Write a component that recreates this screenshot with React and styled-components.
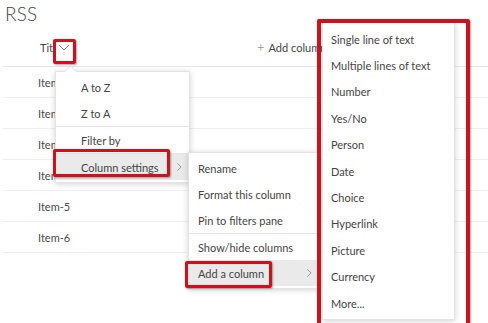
import React from 'react'
import styled, { createGlobalStyle } from 'styled-components'

const GlobalStyle = createGlobalStyle`
  html, body { margin: 0; padding: 0; background: #fff; }
  body { font-family: Lato, "Open Sans", sans-serif; color: #333; }
`

const Page = styled.div`
  position: relative;
  width: 488px;
  height: 323px;
  overflow: hidden;
  background: #fff;
`

const Heading = styled.h1`
  margin: 0 0 0 5px;
  font-size: 19px;
  font-weight: 300;
  line-height: 28px;
  color: #444;
  letter-spacing: 0.2px;
`

const List = styled.div`
  margin-left: 3px;
  display: flex;
  flex-direction: column;
`

const HeaderRow = styled.div`
  height: 38px;
  display: flex;
  align-items: center;
  border-bottom: 1px solid #e6e6e6;
  font-size: 11px;
  color: #444;
`

const TitleCell = styled.div`
  width: 254px;
  padding-left: 37px;
  display: flex;
  align-items: center;
  box-sizing: border-box;
`

const ColumnButton = styled.div`
  position: relative;
  margin-left: -6px;
  width: 18px;
  height: 18px;
  display: flex;
  align-items: center;
  justify-content: center;
  background: #fff;
`

const AddColumn = styled.div`
  display: flex;
  align-items: center;
  gap: 4px;
  color: #444;
`

const Plus = styled.span`
  font-size: 13px;
  font-weight: 300;
  color: #666;
`

const Row = styled.div`
  height: 31px;
  display: flex;
  align-items: center;
  padding-left: 35px;
  border-bottom: 1px solid #eeeeee;
  box-sizing: border-box;
  font-size: 11px;
  color: #4a4a4a;
`

const Menu = styled.div`
  position: absolute;
  left: ${p => p.$left}px;
  top: ${p => p.$top}px;
  width: ${p => p.$width}px;
  padding: ${p => p.$pad || '2px 0'};
  background: #fff;
  border: 1px solid #e3e3e3;
  box-shadow: 0 1px 6px rgba(0, 0, 0, 0.18);
  box-sizing: border-box;
  display: flex;
  flex-direction: column;
`

const Beak = styled.div`
  position: absolute;
  left: 10px;
  top: -5px;
  width: 8px;
  height: 8px;
  background: #fff;
  border-left: 1px solid #e3e3e3;
  border-top: 1px solid #e3e3e3;
  transform: rotate(45deg);
`

const Item = styled.div`
  height: ${p => p.$h || 26}px;
  display: flex;
  align-items: center;
  justify-content: space-between;
  padding: 0 5px 0 ${p => p.$indent}px;
  font-size: 11px;
  color: #444;
  background: ${p => (p.$active ? '#eaeaea' : 'transparent')};
  white-space: nowrap;
`

const Divider = styled.div`
  height: 1px;
  background: #e3e3e3;
`

const Mark = styled.div`
  position: absolute;
  left: ${p => p.$x}px;
  top: ${p => p.$y}px;
  width: ${p => p.$w}px;
  height: ${p => p.$h}px;
  border: ${p => p.$b || 3}px solid #c8141c;
  border-radius: 2px;
  box-sizing: border-box;
  box-shadow: 1px 1px 2px rgba(0, 0, 0, 0.35), inset 0 0 1px rgba(0, 0, 0, 0.3);
  pointer-events: none;
`

const Chevron = ({ dir = 'down', size = 12 }) => (
  <svg width={size} height={size} viewBox="0 0 12 12" fill="none" stroke="#888" strokeWidth="1">
    {dir === 'down' ? <path d="M1 4l5 5 5-5" /> : <path d="M4 1.5l4.5 4.5L4 10.5" />}
  </svg>
)

const items = ['Item-1', 'Item-2', 'Item-3', 'Item-4', 'Item-5', 'Item-6']
const types = [
  'Single line of text', 'Multiple lines of text', 'Number', 'Yes/No', 'Person',
  'Date', 'Choice', 'Hyperlink', 'Picture', 'Currency', 'More...'
]

export default function App() {
  return (
    <Page>
      <GlobalStyle />
      <Heading>RSS</Heading>
      <List>
        <HeaderRow>
          <TitleCell>
            Title
            <ColumnButton><Chevron /></ColumnButton>
          </TitleCell>
          <AddColumn>
            <Plus>+</Plus> Add column
          </AddColumn>
        </HeaderRow>
        {items.map(i => <Row key={i}>{i}</Row>)}
      </List>

      <Menu $left={55} $top={71} $width={135}>
        <Beak />
        <Item $indent={25}>A to Z</Item>
        <Item $indent={25}>Z to A</Item>
        <Divider />
        <Item $indent={25}>Filter by</Item>
        <Divider />
        <Item $indent={25} $active>Column settings <Chevron dir="right" size={10} /></Item>
      </Menu>

      <Menu $left={188} $top={152} $width={132}>
        <Item $indent={9}>Rename</Item>
        <Item $indent={9}>Format this column</Item>
        <Item $indent={9}>Pin to filters pane</Item>
        <Divider />
        <Item $indent={9}>Show/hide columns</Item>
        <Item $indent={9} $active>Add a column <Chevron dir="right" size={10} /></Item>
      </Menu>

      <Menu $left={322} $top={22} $width={133} $pad="3px 0 3px">
        {types.map(t => <Item key={t} $indent={8} $h={26.4}>{t}</Item>)}
      </Menu>

      <Mark $x={53} $y={39} $w={23} $h={25} />
      <Mark $x={53} $y={149} $w={117} $h={28} />
      <Mark $x={185} $y={261} $w={87} $h={27} />
      <Mark $x={317} $y={19} $w={153} $h={320} $b={4} />
    </Page>
  )
}
